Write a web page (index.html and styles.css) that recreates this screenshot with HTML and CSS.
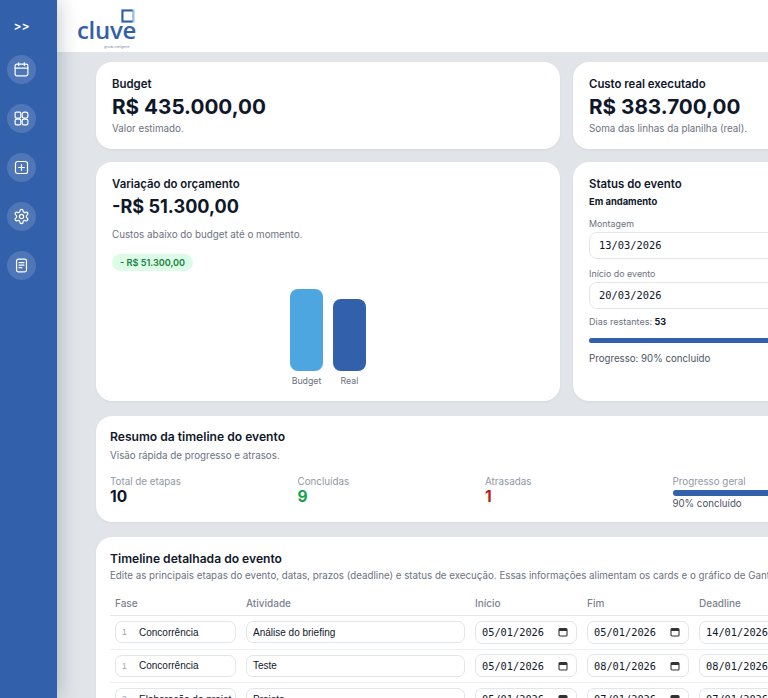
FILE: index.html
```html
<!DOCTYPE html>
<html lang="pt-BR">
<head>
  <meta charset="UTF-8" />
  <meta name="viewport" content="width=device-width, initial-scale=1.0" />
  <title>Cluve - Evento</title>
  <link rel="stylesheet" href="styles.css">
</head>
<body>
  <aside class="sidebar">
    <div class="sidebar-toggle">&gt;&gt;</div>
    <a class="nav-item">
      <svg viewBox="0 0 24 24"><rect x="3" y="4.5" width="18" height="16.5" rx="2.5"/><path d="M3 10h18M8 2.5v4M16 2.5v4"/></svg>
    </a>
    <a class="nav-item">
      <svg viewBox="0 0 24 24"><rect x="3" y="3" width="8" height="8.5" rx="1.5"/><rect x="13" y="3" width="8" height="8.5" rx="3"/><rect x="3" y="13" width="8" height="8" rx="2"/><rect x="13" y="13" width="8" height="8" rx="2"/></svg>
    </a>
    <a class="nav-item">
      <svg viewBox="0 0 24 24"><rect x="3.5" y="3.5" width="17" height="17" rx="3"/><path d="M12 8v8M8 12h8"/></svg>
    </a>
    <a class="nav-item">
      <svg viewBox="0 0 24 24"><path d="M12.22 2h-.44a2 2 0 0 0-2 2v.18a2 2 0 0 1-1 1.73l-.43.25a2 2 0 0 1-2 0l-.15-.08a2 2 0 0 0-2.73.73l-.22.38a2 2 0 0 0 .73 2.73l.15.1a2 2 0 0 1 1 1.72v.51a2 2 0 0 1-1 1.74l-.15.09a2 2 0 0 0-.73 2.73l.22.38a2 2 0 0 0 2.73.73l.15-.08a2 2 0 0 1 2 0l.43.25a2 2 0 0 1 1 1.73V20a2 2 0 0 0 2 2h.44a2 2 0 0 0 2-2v-.18a2 2 0 0 1 1-1.73l.43-.25a2 2 0 0 1 2 0l.15.08a2 2 0 0 0 2.73-.73l.22-.39a2 2 0 0 0-.73-2.73l-.15-.08a2 2 0 0 1-1-1.74v-.5a2 2 0 0 1 1-1.74l.15-.09a2 2 0 0 0 .73-2.73l-.22-.38a2 2 0 0 0-2.73-.73l-.15.08a2 2 0 0 1-2 0l-.43-.25a2 2 0 0 1-1-1.73V4a2 2 0 0 0-2-2z"/><circle cx="12" cy="12" r="3"/></svg>
    </a>
    <a class="nav-item">
      <svg viewBox="0 0 24 24"><rect x="5" y="3" width="14" height="18" rx="2.5"/><path d="M8.5 8h7M8.5 11.5h7M8.5 15h4"/></svg>
    </a>
  </aside>

  <div class="page">
    <header class="topbar">
      <div class="logo">
        <svg class="logo-mark" viewBox="0 0 14 14"><rect x="0.5" y="0.5" width="13" height="13" fill="#8fc4ea"/><rect x="0.5" y="0.5" width="11" height="13" fill="#2f5da8"/><rect x="2.5" y="2.5" width="9" height="9" fill="#fff"/></svg>
        <span class="logo-name">cluve</span>
        <span class="logo-tag">gestão inteligente</span>
      </div>
    </header>

    <main class="content">
      <section class="grid-top">
        <div class="card card-small">
          <h3>Budget</h3>
          <div class="value-big">R$ 435.000,00</div>
          <p class="muted">Valor estimado.</p>
        </div>
        <div class="card card-small">
          <h3>Custo real executado</h3>
          <div class="value-big">R$ 383.700,00</div>
          <p class="muted">Soma das linhas da planilha (real).</p>
        </div>

        <div class="card card-variation">
          <h3>Variação do orçamento</h3>
          <div class="value-mid">-R$ 51.300,00</div>
          <p class="muted variation-text">Custos abaixo do budget até o momento.</p>
          <span class="pill">- R$ 51.300,00</span>
          <div class="chart">
            <div class="chart-col">
              <div class="bar bar-budget"></div>
              <span>Budget</span>
            </div>
            <div class="chart-col">
              <div class="bar bar-real"></div>
              <span>Real</span>
            </div>
          </div>
        </div>

        <div class="card card-status">
          <h3>Status do evento</h3>
          <div class="status-name">Em andamento</div>
          <label class="field-label">Montagem</label>
          <div class="status-date">13/03/2026</div>
          <label class="field-label">Início do evento</label>
          <div class="status-date">20/03/2026</div>
          <p class="days-left">Dias restantes: <b>53</b></p>
          <div class="progress"><div class="progress-fill" style="width: 90%"></div></div>
          <p class="progress-text">Progresso: 90% concluído</p>
        </div>
      </section>

      <section class="card card-summary">
        <h2>Resumo da timeline do evento</h2>
        <p class="muted">Visão rápida de progresso e atrasos.</p>
        <div class="summary-grid">
          <div>
            <div class="stat-label">Total de etapas</div>
            <div class="stat-value">10</div>
          </div>
          <div>
            <div class="stat-label">Concluídas</div>
            <div class="stat-value green">9</div>
          </div>
          <div>
            <div class="stat-label">Atrasadas</div>
            <div class="stat-value red">1</div>
          </div>
          <div>
            <div class="stat-label">Progresso geral</div>
            <div class="progress progress-small"><div class="progress-fill" style="width: 90%"></div></div>
            <div class="stat-note">90% concluído</div>
          </div>
        </div>
      </section>

      <section class="card card-timeline">
        <h2>Timeline detalhada do evento</h2>
        <p class="muted">Edite as principais etapas do evento, datas, prazos (deadline) e status de execução. Essas informações alimentam os cards e o gráfico de Gantt.</p>
        <div class="tl-row tl-head">
          <span>Fase</span>
          <span>Atividade</span>
          <span>Início</span>
          <span>Fim</span>
          <span>Deadline</span>
        </div>

        <div class="tl-row">
          <div class="input phase"><i>1</i><span>Concorrência</span></div>
          <div class="input">Análise do briefing</div>
          <div class="input date">05/01/2026<svg viewBox="0 0 10 10"><rect x="1" y="1.5" width="8" height="7.5" rx="1"/><path class="cal-top" d="M1 3h8"/></svg></div>
          <div class="input date">05/01/2026<svg viewBox="0 0 10 10"><rect x="1" y="1.5" width="8" height="7.5" rx="1"/><path class="cal-top" d="M1 3h8"/></svg></div>
          <div class="input date">14/01/2026<svg viewBox="0 0 10 10"><rect x="1" y="1.5" width="8" height="7.5" rx="1"/><path class="cal-top" d="M1 3h8"/></svg></div>
        </div>
        <div class="tl-row">
          <div class="input phase"><i>1</i><span>Concorrência</span></div>
          <div class="input">Teste</div>
          <div class="input date">05/01/2026<svg viewBox="0 0 10 10"><rect x="1" y="1.5" width="8" height="7.5" rx="1"/><path class="cal-top" d="M1 3h8"/></svg></div>
          <div class="input date">08/01/2026<svg viewBox="0 0 10 10"><rect x="1" y="1.5" width="8" height="7.5" rx="1"/><path class="cal-top" d="M1 3h8"/></svg></div>
          <div class="input date">08/01/2026<svg viewBox="0 0 10 10"><rect x="1" y="1.5" width="8" height="7.5" rx="1"/><path class="cal-top" d="M1 3h8"/></svg></div>
        </div>
        <div class="tl-row">
          <div class="input phase"><i>2</i><span>Elaboração do projet</span></div>
          <div class="input">Projeto</div>
          <div class="input date">05/01/2026<svg viewBox="0 0 10 10"><rect x="1" y="1.5" width="8" height="7.5" rx="1"/><path class="cal-top" d="M1 3h8"/></svg></div>
          <div class="input date">07/01/2026<svg viewBox="0 0 10 10"><rect x="1" y="1.5" width="8" height="7.5" rx="1"/><path class="cal-top" d="M1 3h8"/></svg></div>
          <div class="input date">07/01/2026<svg viewBox="0 0 10 10"><rect x="1" y="1.5" width="8" height="7.5" rx="1"/><path class="cal-top" d="M1 3h8"/></svg></div>
        </div>
      </section>
    </main>
  </div>
</body>
</html>
```

FILE: styles.css
```css
:root {
  --blue: #3360aa;
  --sky: #4da6df;
  --ink: #0f172a;
  --muted: #6b7280;
  --line: #e2e5ea;
}

* {
  box-sizing: border-box;
}

html,
body {
  height: 100%;
}

body {
  margin: 0;
  display: flex;
  overflow: hidden;
  font-family: Inter, "Noto Sans", sans-serif;
  background: #e1e4e9;
  color: var(--ink);
}

h2,
h3,
p {
  margin: 0;
}

/* SIDEBAR */
.sidebar {
  flex: 0 0 57px;
  height: 100%;
  position: relative;
  z-index: 2;
  display: flex;
  flex-direction: column;
  align-items: center;
  gap: 20px;
  padding: 19px 14px 0 0;
  background: var(--blue);
  box-shadow: 0 0 22px rgba(15, 23, 42, 0.28);
}

.sidebar-toggle {
  height: 14px;
  margin-bottom: 2px;
  color: #fff;
  font-size: 12px;
  font-weight: 600;
  line-height: 14px;
}

.nav-item {
  display: flex;
  align-items: center;
  justify-content: center;
  flex: 0 0 29px;
  width: 29px;
  height: 29px;
  border-radius: 50%;
  background: rgba(255, 255, 255, 0.14);
}

.nav-item svg {
  width: 17px;
  height: 17px;
  fill: none;
  stroke: #fff;
  stroke-width: 1.7;
  stroke-linecap: round;
  stroke-linejoin: round;
}

/* TOPO */
.page {
  flex: 0 0 auto;
  width: 860px;
}

.topbar {
  height: 52px;
  padding: 9px 0 0 20px;
  background: #fff;
}

.logo {
  position: relative;
  width: 60px;
  height: 36px;
}

.logo-mark {
  position: absolute;
  top: 0;
  left: 44px;
  width: 14px;
  height: 14px;
}

.logo-name {
  position: absolute;
  top: 6px;
  left: 0;
  color: var(--blue);
  font-family: "Open Sans", sans-serif;
  font-size: 24px;
  font-weight: 600;
  line-height: 30px;
  letter-spacing: -0.3px;
}

.logo-tag {
  position: absolute;
  top: 36px;
  left: 27px;
  color: #7a8aa8;
  font-size: 3px;
  line-height: 4px;
  white-space: nowrap;
}

/* CONTEUDO */
.content {
  padding: 10px 0 0 39px;
}

.grid-top {
  display: grid;
  grid-template-columns: 464px 313px;
  gap: 13px;
  width: 790px;
}

.card {
  background: #fff;
  border-radius: 16px;
  box-shadow: 0 1px 3px rgba(15, 23, 42, 0.05);
}

.card h3 {
  font-size: 11.4px;
  font-weight: 600;
  line-height: 16px;
}

.muted {
  color: var(--muted);
  font-size: 9.8px;
  line-height: 14px;
}

.card-small {
  height: 87px;
  padding: 14px 16px 0;
}

.value-big {
  margin-top: 1px;
  font-size: 20.7px;
  font-weight: 700;
  line-height: 28px;
}

.card-small .muted {
  margin-top: 1px;
}

.card-variation,
.card-status {
  height: 239px;
  padding: 14px 16px 0;
}

.value-mid {
  margin-top: 2px;
  font-size: 18.1px;
  font-weight: 700;
  line-height: 24px;
}

.variation-text {
  margin-top: 10px;
}

.pill {
  display: inline-block;
  margin-top: 12px;
  padding: 0 8px;
  height: 17px;
  border-radius: 9px;
  background: #dcfce7;
  color: #15803d;
  font-size: 9.1px;
  font-weight: 600;
  line-height: 17px;
}

.chart {
  display: flex;
  justify-content: center;
  align-items: flex-end;
  gap: 10px;
  height: 100px;
  margin-top: 16px;
}

.chart-col {
  display: flex;
  flex-direction: column;
  align-items: center;
  gap: 4px;
  width: 33px;
  color: var(--muted);
  font-size: 8.8px;
  line-height: 12px;
}

.bar {
  width: 33px;
  border-radius: 8px;
}

.bar-budget {
  height: 82px;
  background: var(--sky);
}

.bar-real {
  height: 72px;
  background: var(--blue);
}

.status-name {
  margin: 3px 0 5px;
  font-size: 9.4px;
  font-weight: 700;
  line-height: 14px;
}

.field-label {
  display: block;
  margin-top: 8px;
  color: var(--muted);
  font-size: 8.9px;
  line-height: 13px;
}

.field-label + .status-date {
  margin-top: 2px;
}

.status-date {
  height: 27px;
  padding-left: 9px;
  border: 1px solid var(--line);
  border-radius: 8px;
  font-family: "DejaVu Sans Mono", monospace;
  font-size: 10.4px;
  line-height: 25px;
}

.days-left {
  margin-top: 6px;
  color: var(--muted);
  font-size: 9px;
  line-height: 13px;
}

.days-left b {
  color: var(--ink);
}

.progress {
  height: 5px;
  margin-top: 10px;
  border-radius: 3px;
  background: #e5e7eb;
}

.progress-fill {
  height: 100%;
  border-radius: 3px;
  background: var(--blue);
}

.progress-text {
  margin-top: 9px;
  color: #4b5563;
  font-size: 9.7px;
  line-height: 14px;
}

/* RESUMO */
.card-summary {
  width: 790px;
  height: 106px;
  margin-top: 15px;
  padding: 13px 14px 0;
}

.card h2 {
  font-size: 12.1px;
  font-weight: 600;
  line-height: 16px;
}

.card-summary .muted {
  margin-top: 4px;
}

.summary-grid {
  display: grid;
  grid-template-columns: repeat(4, 171.5px);
  gap: 16px;
  margin-top: 12px;
}

.stat-label {
  color: #9098a5;
  font-size: 9.8px;
  line-height: 13px;
}

.stat-value {
  font-size: 15.5px;
  font-weight: 700;
  line-height: 17px;
}

.green {
  color: #16a34a;
}

.red {
  color: #b91c1c;
}

.progress-small {
  height: 6px;
  margin-top: 2px;
}

.stat-note {
  margin-top: 1px;
  color: #4b5563;
  font-size: 9.7px;
  line-height: 13px;
}

/* TIMELINE */
.card-timeline {
  width: 790px;
  height: 200px;
  margin-top: 15px;
  padding: 14px 14px 0;
  border-radius: 16px 16px 0 0;
}

.card-timeline .muted {
  margin-top: 2px;
  font-size: 9.75px;
  white-space: nowrap;
}

.tl-row {
  display: grid;
  grid-template-columns: 121px 219px 102px 102px 102px;
  gap: 10px;
  align-items: center;
  height: 33.5px;
  padding-left: 5px;
  border-bottom: 1px solid #eef0f3;
}

.tl-head {
  height: 30px;
  margin-top: 3px;
  padding-top: 4px;
  border-bottom-color: var(--line);
  color: #7b8390;
  font-size: 10px;
  font-weight: 500;
}

.input {
  display: flex;
  align-items: center;
  height: 22px;
  padding: 0 6px;
  border: 1px solid var(--line);
  border-radius: 7px;
  font-family: "Liberation Sans", sans-serif;
  font-size: 10px;
  white-space: nowrap;
  overflow: hidden;
}

.phase i {
  flex: 0 0 17px;
  color: #9ca3af;
  font-size: 8.5px;
  font-style: normal;
}

.date {
  justify-content: space-between;
  height: 23px;
  padding-right: 8px;
  font-family: "DejaVu Sans Mono", monospace;
  font-size: 10.3px;
}

.date svg {
  flex: 0 0 10px;
  width: 10px;
  height: 10px;
  fill: none;
  stroke: #333;
  stroke-width: 1.1;
}

.date .cal-top {
  stroke-width: 1.8;
}
```
